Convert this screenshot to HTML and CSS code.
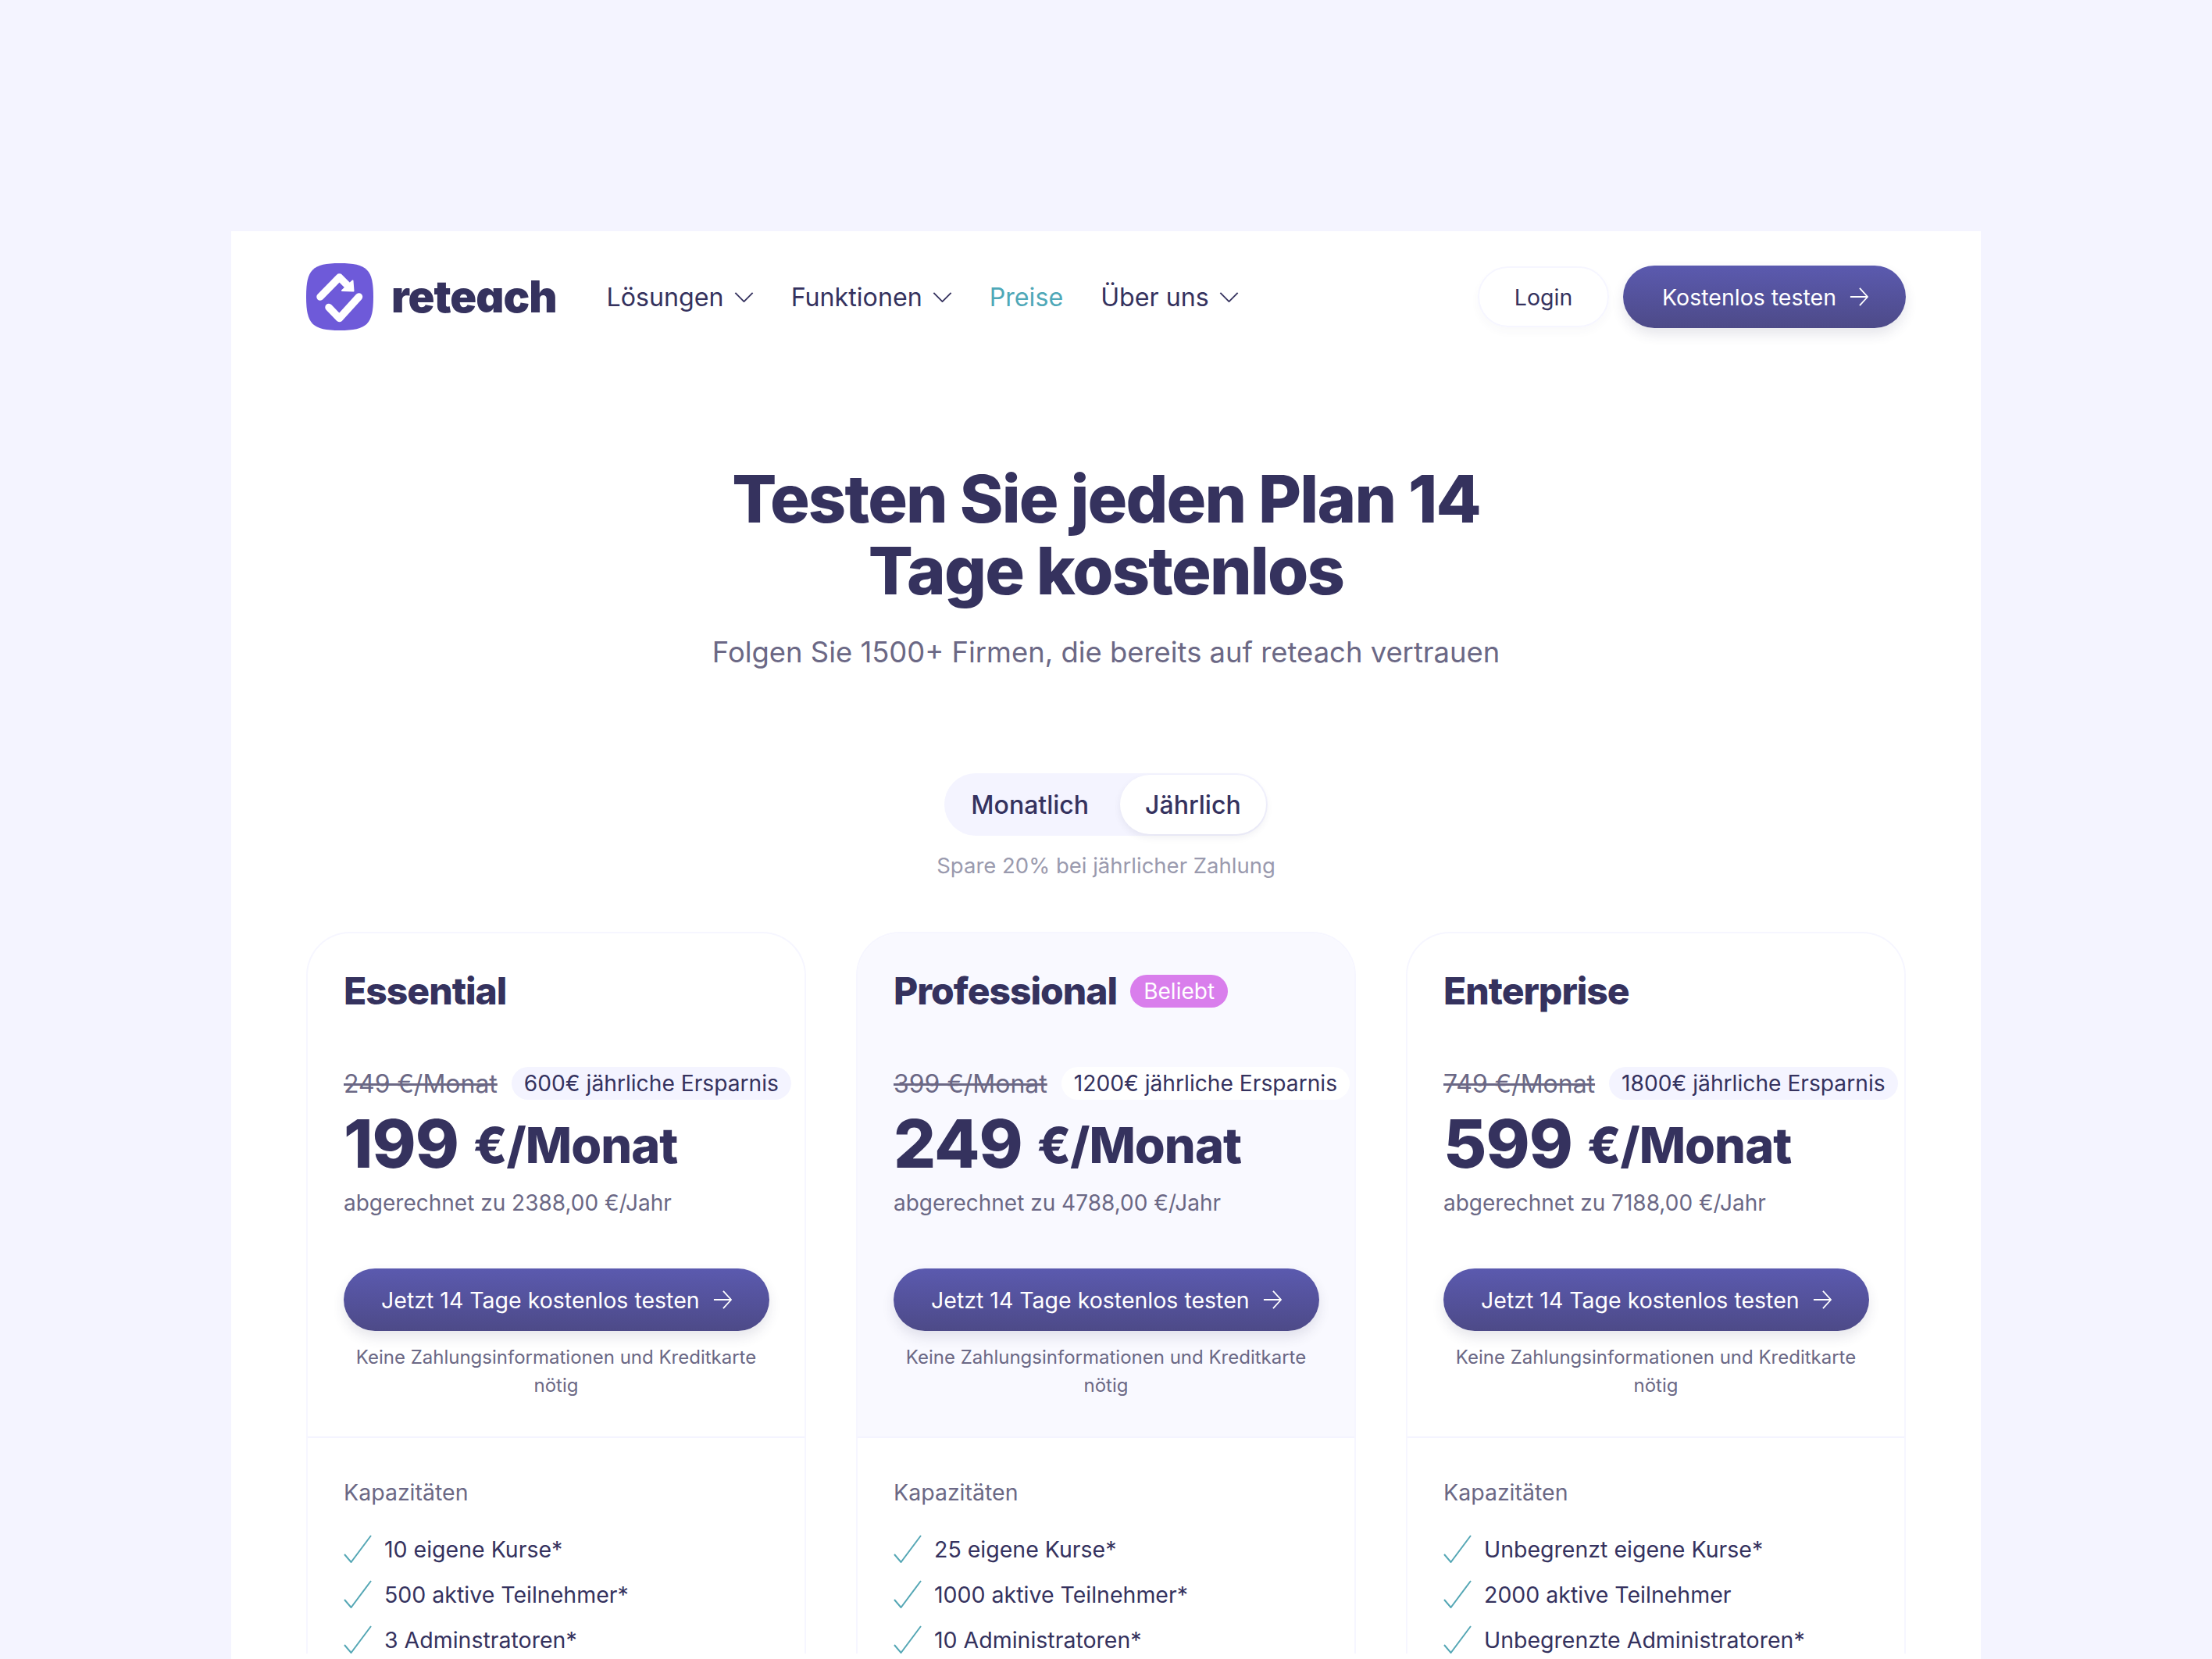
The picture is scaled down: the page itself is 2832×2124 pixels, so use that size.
FILE: index.html
```html
<!DOCTYPE html>
<html lang="de">
<head>
	<meta charset="utf-8">
	<title>reteach Preise</title>
	<link rel="stylesheet" href="styles.css">
</head>
<body>
	<div class="panel">
		<header class="nav">
			<a class="brand" href="#">
				<svg class="logo" viewBox="0 0 86 86">
					<path class="logo-bg" d="M43 0C78 0 86 8 86 43C86 78 78 86 43 86C8 86 0 78 0 43C0 8 8 0 43 0Z"/>
					<path class="logo-mark" d="M18 43L42.500 18L54 29.500"/>
					<path class="logo-head" d="M59.500 22.500L60.500 35.500L46 35Z"/>
					<path class="logo-mark" d="M29 56.500L42.500 70.500L67.500 43"/>
				</svg>
				<span class="wordmark">reteach</span>
			</a>
			<nav class="menu">
				<a href="#">Lösungen <svg class="chev" viewBox="0 0 26 14"><path d="M1 1L13 13L25 1"/></svg></a>
				<a href="#">Funktionen <svg class="chev" viewBox="0 0 26 14"><path d="M1 1L13 13L25 1"/></svg></a>
				<a href="#" class="current">Preise</a>
				<a href="#">Über uns <svg class="chev" viewBox="0 0 26 14"><path d="M1 1L13 13L25 1"/></svg></a>
			</nav>
			<div class="actions">
				<a class="login" href="#">Login</a>
				<a class="cta" href="#">Kostenlos testen <svg class="arrow" viewBox="0 0 26 26"><path d="M1 13H25M14 1L25 13L14 25"/></svg></a>
			</div>
		</header>

		<section class="hero">
			<h1>Testen Sie jeden Plan 14<br>Tage kostenlos</h1>
			<p class="lead">Folgen Sie 1500+ Firmen, die bereits auf reteach vertrauen</p>
			<div class="toggle">
				<span class="toggle-item toggle-off">Monatlich</span>
				<span class="toggle-item toggle-on">Jährlich</span>
			</div>
			<p class="hint">Spare 20% bei jährlicher Zahlung</p>
		</section>

		<section class="plans">
			<article class="plan">
				<div class="plan-top">
					<h2 class="plan-name">Essential</h2>
					<div class="old-row"><s class="old">249 €/Monat</s><span class="save">600€ jährliche Ersparnis</span></div>
					<div class="price"><b>199</b><span class="per">€/Monat</span></div>
					<p class="billed">abgerechnet zu 2388,00 €/Jahr</p>
					<a class="cta cta-plan" href="#">Jetzt 14 Tage kostenlos testen <svg class="arrow" viewBox="0 0 26 26"><path d="M1 13H25M14 1L25 13L14 25"/></svg></a>
					<p class="note">Keine Zahlungsinformationen und Kreditkarte nötig</p>
				</div>
				<div class="plan-body">
					<h3 class="group">Kapazitäten</h3>
					<ul class="features">
						<li><svg class="tick" viewBox="0 0 36 36"><path d="M1 25L9.500 35L35 1"/></svg>10 eigene Kurse*</li>
						<li><svg class="tick" viewBox="0 0 36 36"><path d="M1 25L9.500 35L35 1"/></svg>500 aktive Teilnehmer*</li>
						<li><svg class="tick" viewBox="0 0 36 36"><path d="M1 25L9.500 35L35 1"/></svg>3 Adminstratoren*</li>
					</ul>
				</div>
			</article>

			<article class="plan plan-pro">
				<div class="plan-top">
					<h2 class="plan-name">Professional <span class="tag">Beliebt</span></h2>
					<div class="old-row"><s class="old">399 €/Monat</s><span class="save">1200€ jährliche Ersparnis</span></div>
					<div class="price"><b>249</b><span class="per">€/Monat</span></div>
					<p class="billed">abgerechnet zu 4788,00 €/Jahr</p>
					<a class="cta cta-plan" href="#">Jetzt 14 Tage kostenlos testen <svg class="arrow" viewBox="0 0 26 26"><path d="M1 13H25M14 1L25 13L14 25"/></svg></a>
					<p class="note">Keine Zahlungsinformationen und Kreditkarte nötig</p>
				</div>
				<div class="plan-body">
					<h3 class="group">Kapazitäten</h3>
					<ul class="features">
						<li><svg class="tick" viewBox="0 0 36 36"><path d="M1 25L9.500 35L35 1"/></svg>25 eigene Kurse*</li>
						<li><svg class="tick" viewBox="0 0 36 36"><path d="M1 25L9.500 35L35 1"/></svg>1000 aktive Teilnehmer*</li>
						<li><svg class="tick" viewBox="0 0 36 36"><path d="M1 25L9.500 35L35 1"/></svg>10 Administratoren*</li>
					</ul>
				</div>
			</article>

			<article class="plan">
				<div class="plan-top">
					<h2 class="plan-name">Enterprise</h2>
					<div class="old-row"><s class="old">749 €/Monat</s><span class="save">1800€ jährliche Ersparnis</span></div>
					<div class="price"><b>599</b><span class="per">€/Monat</span></div>
					<p class="billed">abgerechnet zu 7188,00 €/Jahr</p>
					<a class="cta cta-plan" href="#">Jetzt 14 Tage kostenlos testen <svg class="arrow" viewBox="0 0 26 26"><path d="M1 13H25M14 1L25 13L14 25"/></svg></a>
					<p class="note">Keine Zahlungsinformationen und Kreditkarte nötig</p>
				</div>
				<div class="plan-body">
					<h3 class="group">Kapazitäten</h3>
					<ul class="features">
						<li><svg class="tick" viewBox="0 0 36 36"><path d="M1 25L9.500 35L35 1"/></svg>Unbegrenzt eigene Kurse*</li>
						<li><svg class="tick" viewBox="0 0 36 36"><path d="M1 25L9.500 35L35 1"/></svg>2000 aktive Teilnehmer</li>
						<li><svg class="tick" viewBox="0 0 36 36"><path d="M1 25L9.500 35L35 1"/></svg>Unbegrenzte Administratoren*</li>
					</ul>
				</div>
			</article>
		</section>
	</div>
</body>
</html>
```
FILE: styles.css
```css
*{
	margin: 0;
	padding: 0;
	box-sizing: border-box;
}
html, body{
	height: 2124px;
	overflow: hidden;
}
body{
	padding: 296px 296px 0;
	background: #f4f4ff;
	color: #35325e;
	font-family: "Inter", "Liberation Sans", sans-serif;
	font-size: 28.5px;
}
a{
	color: inherit;
	text-decoration: none;
}
svg{
	flex: none;
}
.panel{
	height: 1828px;
	padding: 44px 96px 0;
	background: #fff;
	overflow: hidden;
}

/* navigation */
.nav{
	display: flex;
	align-items: center;
	height: 80px;
}
.brand{
	display: flex;
	align-items: center;
	gap: 23px;
}
.logo{
	width: 86px;
	height: 86px;
}
.logo-bg{
	fill: #6e5ad9;
}
.logo-mark{
	fill: none;
	stroke: #fff;
	stroke-width: 9.500;
	stroke-linecap: round;
	stroke-linejoin: round;
}
.logo-head{
	fill: #fff;
	stroke: #fff;
	stroke-width: 2;
	stroke-linejoin: round;
}
.wordmark{
	font-size: 56px;
	font-weight: 900;
	font-feature-settings: "cv11";
	letter-spacing: -1px;
	line-height: 1;
}
.menu{
	display: flex;
	align-items: center;
	gap: 48px;
	margin-left: 64px;
	font-size: 32.2px;
}
.menu a{
	display: flex;
	align-items: center;
	gap: 13px;
}
.menu .current{
	color: #4fa8b8;
}
.chev{
	width: 25px;
	height: 13px;
}
.chev path, .arrow path{
	fill: none;
	stroke: currentColor;
	stroke-width: 2;
}
.actions{
	display: flex;
	align-items: center;
	gap: 18px;
	margin-left: auto;
}
.actions .cta{
	padding-left: 50px;
}
.login{
	display: flex;
	align-items: center;
	justify-content: center;
	width: 168px;
	height: 78px;
	border: 2px solid #f6f6ff;
	border-radius: 39px;
	box-shadow: 0 6px 12px rgba(53, 50, 94, 0.03);
}
.cta{
	display: inline-flex;
	align-items: center;
	justify-content: center;
	gap: 17px;
	height: 80px;
	padding: 0 48px;
	border-radius: 40px;
	background: linear-gradient(#5b5aaf, #4d4a88);
	box-shadow: 0 8px 16px rgba(53, 50, 94, 0.12);
	color: #fff;
	white-space: nowrap;
}
.arrow{
	width: 24px;
	height: 24px;
}

/* hero */
.hero{
	text-align: center;
}
h1{
	margin-top: 172px;
	font-size: 84.5px;
	font-weight: 800;
	line-height: 92px;
	letter-spacing: -1.8px;
}
.lead{
	margin-top: 35px;
	font-size: 36.4px;
	line-height: 48px;
	color: #6b6885;
}
.toggle{
	display: inline-flex;
	align-items: center;
	height: 80px;
	margin-top: 131px;
	padding: 2px;
	border-radius: 40px;
	background: #f4f4ff;
	font-size: 32px;
	font-weight: 450;
}
.toggle-item{
	display: flex;
	align-items: center;
	height: 76px;
	padding: 0 32px;
	border-radius: 38px;
}
.toggle-off{
	padding-right: 40px;
}
.toggle-on{
	background: #fff;
	box-shadow: 0 4px 10px rgba(53, 50, 94, 0.08);
}
.hint{
	margin-top: 18px;
	font-size: 27.500px;
	line-height: 40px;
	color: #9a9aae;
}

/* plans */
.plans{
	display: grid;
	grid-template-columns: repeat(3, 640px);
	gap: 64px;
	margin-top: 65px;
}
.plan{
	border: 2px solid #f6f6ff;
	border-bottom: none;
	border-radius: 56px 56px 0 0;
}
.plan-top{
	height: 646px;
	padding: 44px 46px 0;
	border-bottom: 2px solid #f4f4ff;
	border-radius: 54px 54px 0 0;
}
.plan-pro .plan-top{
	background: #f9f9ff;
}
.plan-name{
	display: flex;
	align-items: center;
	gap: 17px;
	font-size: 48px;
	font-weight: 800;
	line-height: 60px;
	letter-spacing: -1px;
	white-space: nowrap;
}
.tag{
	width: 125px;
	height: 42px;
	border-radius: 21px;
	background: #d97eec;
	color: #fff;
	font-size: 28px;
	font-weight: 400;
	line-height: 42px;
	letter-spacing: 0;
	text-align: center;
}
.old-row{
	display: flex;
	align-items: center;
	gap: 18px;
	margin-top: 67px;
	white-space: nowrap;
}
.old{
	font-size: 32px;
	color: #6b6885;
}
.save{
	height: 42px;
	padding: 0 16px;
	border-radius: 21px;
	background: #f4f4ff;
	font-size: 28.200px;
	line-height: 42px;
}
.plan-pro .save{
	background: #fff;
}
.price{
	display: flex;
	align-items: center;
	gap: 19px;
	height: 100px;
	margin-top: 6px;
	font-weight: 800;
	letter-spacing: -1px;
	white-space: nowrap;
}
.price b{
	font-size: 85px;
	font-weight: 800;
}
.per{
	margin-top: 4px;
	font-size: 63px;
}
.billed{
	margin-top: 6px;
	font-size: 28px;
	line-height: 40px;
	color: #6b6885;
}
.cta-plan{
	margin-top: 64px;
}
.note{
	margin-top: 16px;
	font-size: 24px;
	line-height: 36px;
	text-align: center;
	color: #6b6885;
}

/* feature list */
.plan-body{
	padding: 50px 46px 0;
}
.group{
	font-size: 28.5px;
	font-weight: 400;
	line-height: 40px;
	color: #6b6885;
}
.features{
	display: grid;
	gap: 22px;
	margin-top: 34px;
	list-style-type: none;
}
.features li{
	display: flex;
	align-items: center;
	gap: 16px;
	height: 36px;
}
.tick{
	width: 36px;
	height: 36px;
}
.tick path{
	fill: none;
	stroke: #55a7b5;
	stroke-width: 2;
}
```
